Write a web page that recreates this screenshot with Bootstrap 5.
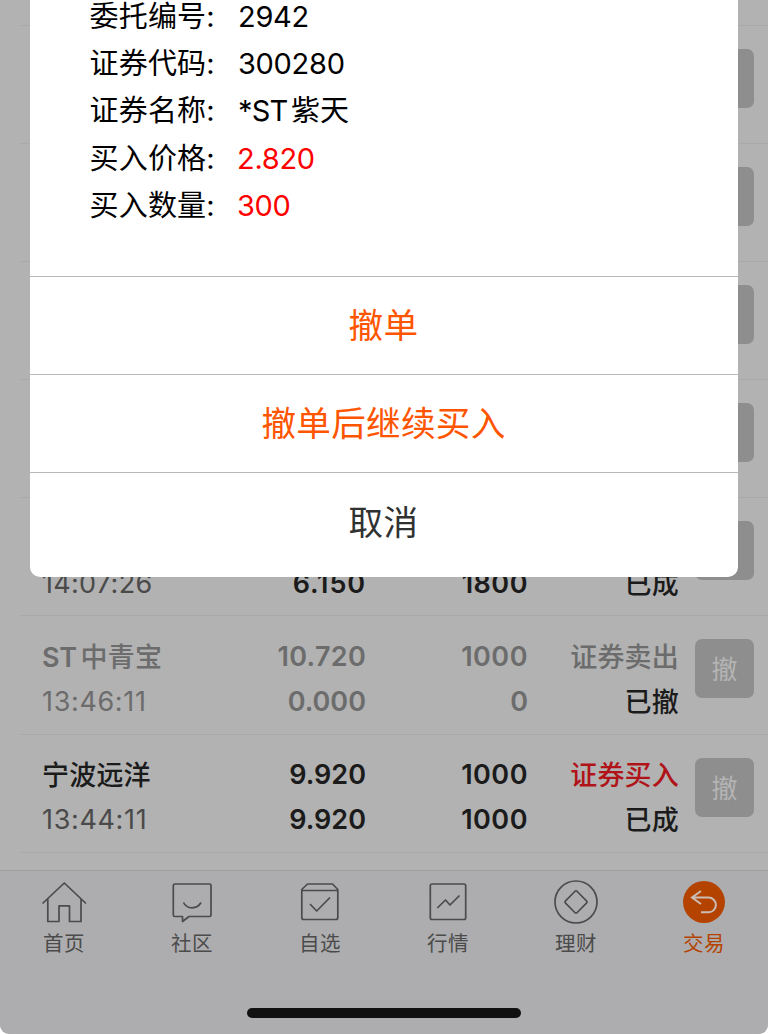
<!DOCTYPE html>
<html lang="zh-CN">
<head>
<meta charset="utf-8">
<meta name="viewport" content="width=device-width, initial-scale=1">
<title>委托撤单</title>
<link href="https://cdn.jsdelivr.net/npm/bootstrap@5.3.0/dist/css/bootstrap.min.css" rel="stylesheet">
<style>
  body { font-family: Inter, "Noto Sans CJK SC", sans-serif; background: #fff; }
  .screen { height: 1034px; background: #b2b2b2; border-radius: 0 0 9px 9px; }
  .orders { height: 870px; }
  .prev-row { height: 26px; }
  .prev-row, .order { margin-left: 20px; border-bottom: 1px solid #a9a9a9; flex: none; }
  .order { height: 118.1px; padding: 17.7px 14px 0 22px; color: #1b1b1b; font-size: 27px; }
  .line { height: 45px; line-height: 45px; font-weight: 600; white-space: nowrap; }
  .c-name { width: 150px; font-weight: 500; letter-spacing: .2px; }
  .c-price { width: 174px; text-align: right; }
  .c-qty { width: 162px; text-align: right; }
  .c-qty.spaced { letter-spacing: .5px; }
  .c-price.spaced { letter-spacing: .9px; }
  .c-price.loose { letter-spacing: .3px; }
  .c-state { width: 151px; text-align: right; font-weight: 500; letter-spacing: .2px; }
  .c-state, .han { line-height: 47px; }
  .c-time { font-weight: 400; letter-spacing: .65px; color: #4a4a4a; }
  .c-time.even { letter-spacing: .3px; }
  .latin { font-weight: 600; margin-right: 4px; letter-spacing: -.4px; }
  .sep { margin-right: 3.5px; letter-spacing: -.8px; }
  .dim, .dim .c-time { color: #6c6c6c; }
  .dim .done { color: #1b1b1b; }
  .buy { color: #b01418; }
  .revoke { width: 59px; height: 59px; margin-top: 5.3px; border-radius: 7px; background: #8e8e8e; color: #b4b4b4; font-size: 26px; line-height: 61px; padding: 0; border: 0; }
  .tabs { height: 164px; background: #adadaf; border-top: 1px solid #a0a0a1; border-radius: 0 0 9px 9px; }
  .tab { width: 128px; padding-top: 7px; color: #4b4b4b; font-size: 20.5px; letter-spacing: .6px; line-height: 30px; }
  .tab svg { width: 48px; height: 48px; margin-bottom: 3px; fill: none; stroke: currentColor; stroke-width: 1.7; stroke-linejoin: round; }
  .tab.active { color: #b54300; background: none; }
  .home-bar { width: 274px; height: 10px; border-radius: 5px; background: #111; margin-bottom: 16px; }
  .sheet { left: 30px; top: 0; width: 708px; height: 577px; border-radius: 0 0 10px 10px; background: #fff; }
  .details { height: 275.6px; padding: 0 0 0 59.5px; color: #000; font-size: 29px; }
  .details .pair { height: 47.25px; line-height: 47.25px; }
  .details .pair:first-child { height: 40px; line-height: 33px; }
  .label { width: 148.5px; letter-spacing: .2px; }
  .value { letter-spacing: -.3px; }
  .danger-value { color: #f00; margin-left: -1px; }
  .action { height: 98.4px; border: 0; border-top: 1px solid #b8b8b8; background: none; color: #ff5500; font-size: 34.6px; letter-spacing: .3px; line-height: 50px; padding: 0 1px 1px 0; }
  .action:last-child { height: 104.6px; padding-bottom: 7px; color: #303232; }
</style>
</head>
<body>
<main class="screen position-relative overflow-hidden d-flex flex-column">
  <section class="orders d-flex flex-column overflow-hidden">
    <div class="prev-row"></div>
    <div class="order d-flex justify-content-end"><button class="btn revoke"></button></div>
    <div class="order d-flex justify-content-end"><button class="btn revoke"></button></div>
    <div class="order d-flex justify-content-end"><button class="btn revoke"></button></div>
    <div class="order d-flex justify-content-end"><button class="btn revoke"></button></div>
    <div class="order d-flex justify-content-between">
      <div>
        <div class="line"></div>
        <div class="line d-flex"><span class="c-name c-time even">14:07:26</span><span class="c-price spaced">6.150</span><span class="c-qty spaced">1800</span><span class="c-state">已成</span></div>
      </div>
      <button class="btn revoke"></button>
    </div>
    <div class="order dim d-flex justify-content-between">
      <div>
        <div class="line d-flex"><span class="c-name han"><span class="latin">ST</span>中青宝</span><span class="c-price loose">10.720</span><span class="c-qty spaced">1000</span><span class="c-state">证券卖出</span></div>
        <div class="line d-flex"><span class="c-name c-time">13:46:11</span><span class="c-price">0.000</span><span class="c-qty">0</span><span class="c-state done">已撤</span></div>
      </div>
      <button class="btn revoke">撤</button>
    </div>
    <div class="order d-flex justify-content-between">
      <div>
        <div class="line d-flex"><span class="c-name han">宁波远洋</span><span class="c-price">9.920</span><span class="c-qty spaced">1000</span><span class="c-state buy">证券买入</span></div>
        <div class="line d-flex"><span class="c-name c-time">13:44:11</span><span class="c-price">9.920</span><span class="c-qty spaced">1000</span><span class="c-state">已成</span></div>
      </div>
      <button class="btn revoke">撤</button>
    </div>
  </section>

  <footer class="tabs d-flex flex-column justify-content-between align-items-center">
    <nav class="d-flex w-100">
      <div class="tab d-flex flex-column align-items-center">
        <svg viewBox="0 0 48 48"><path d="M2.500 25.500 24.300 5 46 25.500M7.800 21V43.500H19V27.800H29.500V43.500H41V21"/></svg>
        <span>首页</span>
      </div>
      <div class="tab d-flex flex-column align-items-center">
        <svg viewBox="0 0 48 48"><path d="M7 6H41.500Q43 6 43 7.500V37Q43 38.500 41.500 38.500H21L14.500 43.500V38.500H7Q5.300 38.500 5.300 37V7.500Q5.300 6 7 6ZM15.500 24.500Q18 29.800 24 29.800T33 24.500"/></svg>
        <span>社区</span>
      </div>
      <div class="tab d-flex flex-column align-items-center">
        <svg viewBox="0 0 48 48"><path d="M11.500 6H36.500L41.800 11.500V39.500Q41.800 41.500 39.800 41.500H7.800Q5.800 41.500 5.800 39.500V11.500ZM5.800 12.500H41.800M14 26 20.700 33 34 19.500"/></svg>
        <span>自选</span>
      </div>
      <div class="tab d-flex flex-column align-items-center">
        <svg viewBox="0 0 48 48"><path d="M8 6H40Q41.700 6 41.700 7.700V39.800Q41.700 41.500 40 41.500H8Q6.300 41.500 6.300 39.800V7.700Q6.300 6 8 6ZM13.300 30 21.500 22 26 27 35.500 17.500"/></svg>
        <span>行情</span>
      </div>
      <div class="tab d-flex flex-column align-items-center">
        <svg viewBox="0 0 48 48"><circle cx="24" cy="24" r="21"/><path d="M22.800 13.500Q24 12.300 25.200 13.500L34.500 22.800Q35.700 24 34.500 25.200L25.200 34.500Q24 35.700 22.800 34.500L13.500 25.200Q12.300 24 13.500 22.800Z"/></svg>
        <span>理财</span>
      </div>
      <div class="tab active d-flex flex-column align-items-center">
        <svg viewBox="0 0 48 48"><circle cx="24" cy="24" r="21" fill="currentColor" stroke="none"/><path stroke="#c9bdb6" stroke-width="2" stroke-linejoin="miter" d="M21 13 12 19.500 21 26M12 19.500H28.500A7.400 7.400 0 0 1 28.500 34.300H21"/></svg>
        <span>交易</span>
      </div>
    </nav>
    <div class="home-bar"></div>
  </footer>

  <div class="sheet position-absolute d-flex flex-column overflow-hidden">
    <div class="details d-flex flex-column">
      <div class="pair d-flex"><span class="label">委托编号:</span><span class="value">2942</span></div>
      <div class="pair d-flex"><span class="label">证券代码:</span><span class="value">300280</span></div>
      <div class="pair d-flex"><span class="label">证券名称:</span><span><span class="sep">*ST</span>紫天</span></div>
      <div class="pair d-flex"><span class="label">买入价格:</span><span class="value danger-value">2.820</span></div>
      <div class="pair d-flex"><span class="label">买入数量:</span><span class="value danger-value">300</span></div>
    </div>
    <button class="action w-100">撤单</button>
    <button class="action w-100">撤单后继续买入</button>
    <button class="action w-100">取消</button>
  </div>
</main>
<script src="https://cdn.jsdelivr.net/npm/bootstrap@5.3.0/dist/js/bootstrap.bundle.min.js"></script>
</body>
</html>
